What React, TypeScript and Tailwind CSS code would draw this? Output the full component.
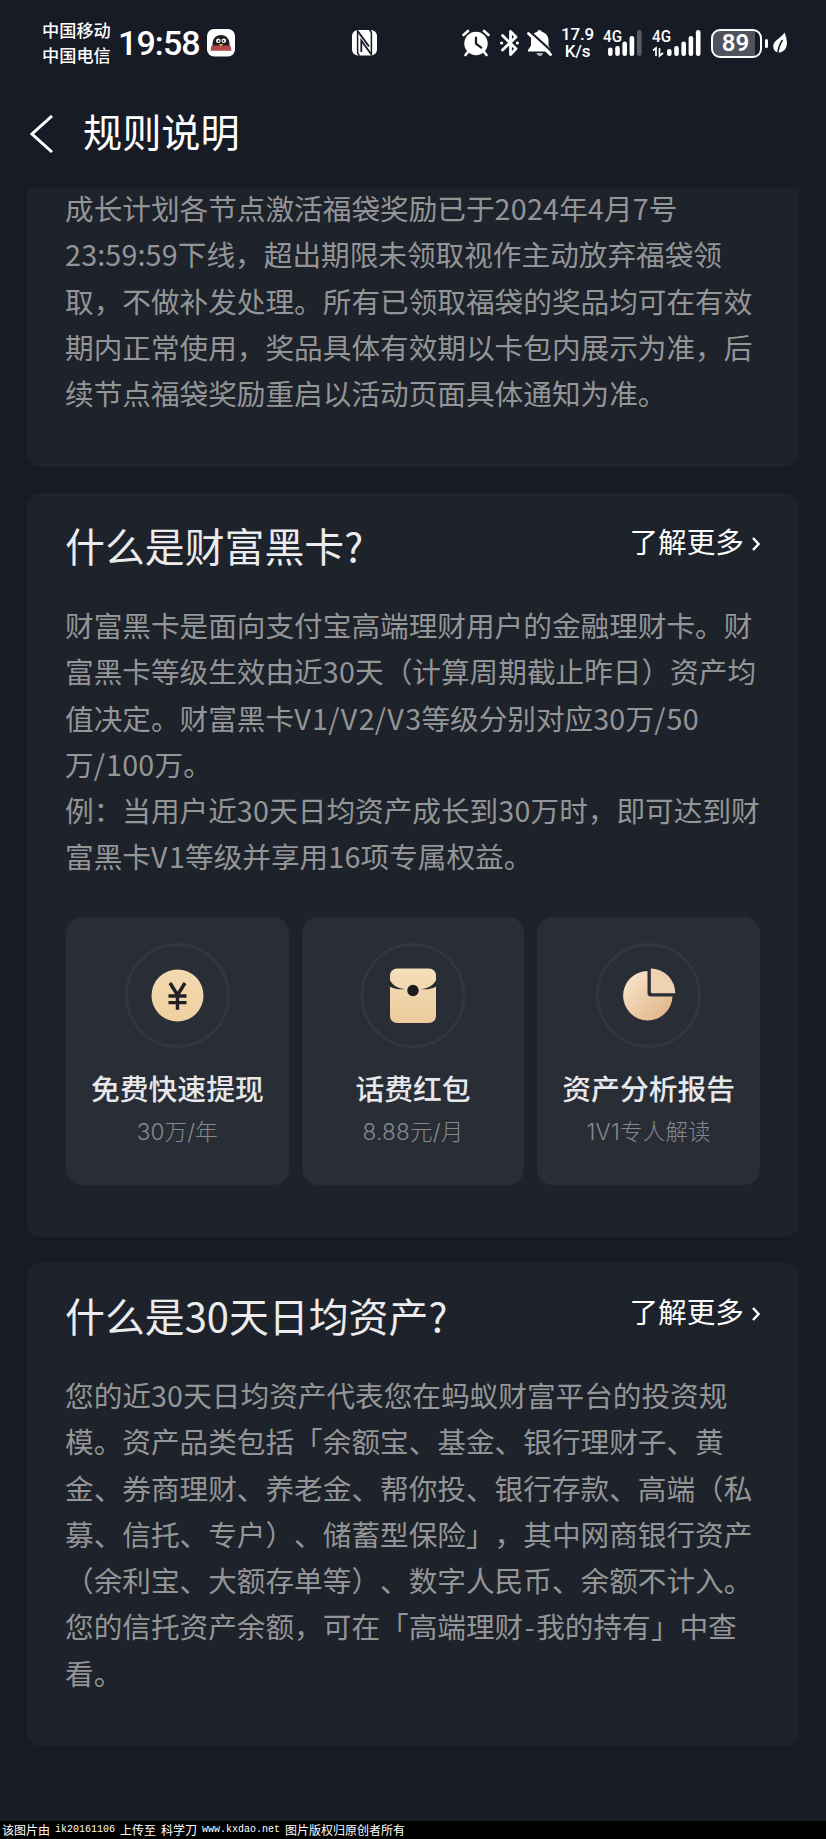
import { ReactNode } from 'react';

interface Benefit {
  id: string;
  title: string;
  desc: string;
  icon: ReactNode;
}

interface RuleCardProps {
  title: string;
  lines: string[];
  children?: ReactNode;
}

const planLines = [
  '成长计划各节点激活福袋奖励已于2024年4月7号',
  '23:59:59下线，超出期限未领取视作主动放弃福袋领',
  '取，不做补发处理。所有已领取福袋的奖品均可在有效',
  '期内正常使用，奖品具体有效期以卡包内展示为准，后',
  '续节点福袋奖励重启以活动页面具体通知为准。',
];

const blackCardLines = [
  '财富黑卡是面向支付宝高端理财用户的金融理财卡。财',
  '富黑卡等级生效由近30天（计算周期截止昨日）资产均',
  '值决定。财富黑卡V1/V2/V3等级分别对应30万/50',
  '万/100万。',
  '例：当用户近30天日均资产成长到30万时，即可达到财',
  '富黑卡V1等级并享用16项专属权益。',
];

const assetLines = [
  '您的近30天日均资产代表您在蚂蚁财富平台的投资规',
  '模。资产品类包括「余额宝、基金、银行理财子、黄',
  '金、券商理财、养老金、帮你投、银行存款、高端（私',
  '募、信托、专户）、储蓄型保险」，其中网商银行资产',
  '（余利宝、大额存单等）、数字人民币、余额不计入。',
  '您的信托资产余额，可在「高端理财-我的持有」中查',
  '看。',
];

const benefits: Benefit[] = [
  { id: 'withdraw', title: '免费快速提现', desc: '30万/年', icon: <CoinIcon /> },
  { id: 'packet', title: '话费红包', desc: '8.88元/月', icon: <PacketIcon /> },
  { id: 'report', title: '资产分析报告', desc: '1V1专人解读', icon: <PieIcon /> },
];

function CoinIcon() {
  return (
    <svg width="106" height="106" viewBox="0 0 106 106" fill="none">
      <defs>
        <linearGradient id="coin" x1="0" y1="0" x2="0" y2="1">
          <stop offset="0" stopColor="#f2d9b0" />
          <stop offset="1" stopColor="#f0d0a0" />
        </linearGradient>
      </defs>
      <circle cx="53.5" cy="52.5" r="51" stroke="#32363f" strokeWidth="3" />
      <circle cx="53.5" cy="52.5" r="26" fill="url(#coin)" />
      <path d="M46 40 53.500 52 61 40M44.500 53h18M44.500 59.600h18M53.500 52v14.800" stroke="#1f2023" strokeWidth="3.400" />
    </svg>
  );
}

function PacketIcon() {
  return (
    <svg width="106" height="106" viewBox="0 0 106 106" fill="none">
      <defs>
        <linearGradient id="packet" x1="0" y1="0" x2="0" y2="1">
          <stop offset="0" stopColor="#f5dfba" />
          <stop offset="1" stopColor="#ecca9b" />
        </linearGradient>
      </defs>
      <circle cx="53" cy="52.5" r="51" stroke="#32363f" strokeWidth="3" />
      <rect x="30" y="25.500" width="46" height="54.500" rx="7" fill="url(#packet)" />
      <path d="M29.800 37c3 5.500 8.500 8.500 15.200 9-5.500 1-11-.3-15.200-2.500zM76.200 37c-3 5.500-8.500 8.500-15.200 9 5.500 1 11-.3 15.200-2.500z" fill="#24262b" />
      <circle cx="53" cy="47.500" r="5.700" fill="#1a1b1e" />
    </svg>
  );
}

function PieIcon() {
  return (
    <svg width="106" height="106" viewBox="0 0 106 106" fill="none">
      <defs>
        <linearGradient id="pie" x1="0" y1="0" x2="1" y2="1">
          <stop offset="0.1" stopColor="#f8e3cb" />
          <stop offset="1" stopColor="#e0b080" />
        </linearGradient>
      </defs>
      <circle cx="52.5" cy="52.5" r="51" stroke="#32363f" strokeWidth="3" />
      <path d="M51.500 28A24.700 24.700 0 1 0 76.500 53.500H55q-3.500 0-3.500-3.500z" fill="url(#pie)" />
      <path d="M54.800 25.500v23.200q0 1.500 1.500 1.500h23A24.800 24.800 0 0 0 54.800 25.500z" fill="#eed2b1" />
    </svg>
  );
}

function QQIcon() {
  return (
    <svg className="ml-2" width="28" height="28" viewBox="0 0 28 28">
      <rect width="28" height="27.500" rx="7" fill="#fff" />
      <path d="M5.500 17C5 10 8.500 6 14 6s9 4 8.500 11z" fill="#1c1b1f" />
      <path d="M4.500 16.500h19l1 5.300h-21z" fill="#b0484a" />
      <circle cx="11.300" cy="11.700" r="2.300" fill="#fff" />
      <circle cx="16.800" cy="11.700" r="2.300" fill="#fff" />
      <circle cx="11.600" cy="11.900" r=".9" fill="#1c1b1f" />
      <circle cx="16.500" cy="11.900" r=".9" fill="#1c1b1f" />
      <path d="M11.800 15h4.500L14 17.800z" fill="#e9a23b" />
    </svg>
  );
}

function NfcIcon() {
  return (
    <svg width="25" height="26" viewBox="0 0 25 26" fill="none">
      <rect width="25" height="25.500" rx="6" fill="#fff" />
      <path d="M5.600 0v22q0 2.500 2 3.500M19.400 25.500v-22q0-2.500-2-3.500" stroke="#171b25" strokeWidth="1.500" />
      <path d="M6 1.500 17 16.500" stroke="#171b25" strokeWidth="2" />
      <path d="M9.300 22V10.500L19 24" stroke="#171b25" strokeWidth="1.800" />
    </svg>
  );
}

function AlarmIcon() {
  return (
    <svg width="28" height="28" viewBox="0 0 28 28" fill="none" stroke="#fff" strokeLinecap="round">
      <circle cx="14" cy="14.500" r="11.700" fill="#fff" stroke="none" />
      <path d="M1.500 6 6 2M26.500 6 22 2M5.500 23.500 3.500 26M22.500 23.500l2 2.500" strokeWidth="2.600" />
      <path d="M14 8.500v6.200l5.300 4" stroke="#171b25" strokeWidth="2.200" />
    </svg>
  );
}

function BluetoothIcon() {
  return (
    <svg className="ml-2.5" width="19" height="28" viewBox="0 0 19 28" fill="none" stroke="#fff" strokeWidth="2.800" strokeLinecap="round" strokeLinejoin="round">
      <path d="M2.500 6.500 16 19.800 10.500 25.500v-23L16 8 2.500 21" />
      <path d="M1.500 14h.2M17.300 14h.2" strokeWidth="3" />
    </svg>
  );
}

function BellOffIcon() {
  return (
    <svg className="ml-2" width="25" height="28" viewBox="0 0 25 28" fill="none">
      <path d="M12.500 1c1.300 0 2 .7 2.200 1.800 4 1 6.800 4.200 6.800 8.400v5.300l2.500 4.500v1.500H1V21l3-4.500v-5.300c0-4.200 2.300-7.400 6.300-8.400C10.500 1.700 11.200 1 12.500 1z" fill="#fff" />
      <path d="M9.500 24h6.500c-.4 2-1.500 3-3.200 3S10 26 9.500 24z" fill="#aeb0b5" />
      <path d="M4 3.500 25 22.500" stroke="#171b25" strokeWidth="2.200" />
      <path d="M1.500 4.500 23.500 25.500" stroke="#fff" strokeWidth="2.800" strokeLinecap="round" />
    </svg>
  );
}

function SignalOne() {
  return (
    <svg className="ml-2 overflow-visible font-['Roboto',sans-serif]" width="40" height="28" viewBox="0 0 40 28">
      <text x="0" y="13.200" fontSize="16.500" fontWeight="500" fill="#fff" textLength="19" lengthAdjust="spacingAndGlyphs">4G</text>
      <rect x="5" y="18.500" width="4.600" height="8.500" rx="2.200" fill="#fff" />
      <rect x="12.200" y="17" width="4.600" height="10" rx="2.200" fill="#fff" />
      <rect x="19.400" y="12.500" width="4.600" height="14.500" rx="2.200" fill="#fff" />
      <rect x="26.600" y="7" width="4.600" height="20" rx="2.200" fill="#fff" />
      <rect x="34" y="1" width="4.600" height="26" rx="2.200" fill="#5a5d65" />
    </svg>
  );
}

function SignalTwo() {
  return (
    <svg className="ml-[9px] overflow-visible font-['Roboto',sans-serif]" width="50" height="28" viewBox="0 0 50 28">
      <text x="0" y="13.200" fontSize="16.500" fontWeight="500" fill="#fff" textLength="19" lengthAdjust="spacingAndGlyphs">4G</text>
      <path d="M1 21.500 4 19v8M7.500 19v8l3.500-3" stroke="#fff" strokeWidth="1.700" fill="none" />
      <rect x="15" y="20" width="4.600" height="7" rx="2.200" fill="#fff" />
      <rect x="22.200" y="17" width="4.600" height="10" rx="2.200" fill="#fff" />
      <rect x="29.400" y="12.500" width="4.600" height="14.500" rx="2.200" fill="#fff" />
      <rect x="36.600" y="7" width="4.600" height="20" rx="2.200" fill="#fff" />
      <rect x="43.900" y="1" width="4.600" height="26" rx="2.200" fill="#fff" />
    </svg>
  );
}

function Battery() {
  return (
    <div className="ml-[9px] flex items-center">
      <div className="flex h-[29px] w-[51px] items-center rounded-[9px] border-2 border-white bg-gradient-to-r from-[#50535b] from-90% to-transparent to-90% pr-0.5">
        <span className="flex-1 text-center font-['Roboto',sans-serif] text-2xl leading-none font-semibold text-white">89</span>
      </div>
      <div className="ml-[3px] h-[9px] w-[3px] rounded-full bg-white" />
      <svg className="ml-[5px]" width="14" height="23" viewBox="0 0 14 23" fill="none">
        <path d="M11.500.5C13.500 5.500 14.500 10 13.500 14c-1 4.500-5 7-8.500 6.500-3.500-.5-5.500-4-4.500-8C1.500 8 8 6 11.500.5z" fill="#fff" />
        <path d="M9.500 8C6.500 12.500 5 16 4.800 22.500" stroke="#171b25" strokeWidth="1.500" />
      </svg>
    </div>
  );
}

function StatusBar() {
  return (
    <div className="flex h-[86px] shrink-0 items-center pl-[42px] text-white">
      <div className="w-[69px] pb-[3px] text-[17.200px] leading-[25px] font-medium whitespace-nowrap">
        <p>中国移动</p>
        <p>中国电信</p>
      </div>
      <span className="ml-[7px] w-[81px] font-['Roboto',sans-serif] text-[34px] leading-none font-medium tracking-[-0.9px]">19:58</span>
      <QQIcon />
      <div className="ml-[117px]">
        <NfcIcon />
      </div>
      <div className="ml-[85px] flex items-center">
        <AlarmIcon />
        <BluetoothIcon />
        <BellOffIcon />
        <div className="ml-2 w-[35px] text-center font-['Roboto',sans-serif] text-[17px] leading-none font-medium tracking-[-0.2px]">
          <p>17.9</p>
          <p>K/s</p>
        </div>
        <SignalOne />
        <SignalTwo />
        <Battery />
      </div>
    </div>
  );
}

// V, slash, hyphen and digits run a little wider than the font's own advance
function spaceOut(line: string) {
  return line.split(/([V/-]|\d+)/).map((part, i) => {
    if (part === 'V') return <span key={i} className="tracking-[1.5px]">V</span>;
    if (part === '/') return <span key={i} className="tracking-[1.2px]">/</span>;
    if (part === '-') return <span key={i} className="px-[1.5px]">-</span>;
    if (/^\d+$/.test(part)) return <span key={i} className="tracking-[0.25px]">{part}</span>;
    return part;
  });
}

function Paragraph({ lines }: { lines: string[] }) {
  return (
    <div className="-ml-px text-[28.650px] leading-[46.300px] whitespace-nowrap text-[#949597]">
      {lines.map((line) => (
        <p key={line}>{spaceOut(line)}</p>
      ))}
    </div>
  );
}

function RuleCard({ title, lines, children }: RuleCardProps) {
  return (
    <section className="rounded-[14px] bg-[#1e222a] px-[39px]">
      <div className="flex h-[109px] items-start justify-between">
        <h2 className="-ml-px pt-[22px] text-[39.900px] leading-[60px] text-[#ececee]">{title}</h2>
        <button className="flex items-center gap-[7px] pt-[28px] text-[28.650px] leading-[40px] text-white">
          了解更多
          <svg className="mt-1.5" width="9" height="14" viewBox="0 0 9 14" fill="none">
            <path d="M2 1 7.500 7 2 13" stroke="#fff" strokeWidth="2.400" />
          </svg>
        </button>
      </div>
      <Paragraph lines={lines} />
      {children}
    </section>
  );
}

export default function App() {
  return (
    <div className="flex h-[1839px] w-[826px] flex-col overflow-hidden bg-[#171b25] font-['Noto_Sans_CJK_SC',sans-serif] [text-spacing-trim:space-all]">
      <StatusBar />

      {/* Title bar */}
      <header className="flex h-[102px] shrink-0 items-start pl-[30px] text-white">
        <svg className="mt-[29px]" width="23" height="38" viewBox="0 0 23 38" fill="none">
          <path d="M22 1 2 19l20 18" stroke="#fff" strokeWidth="3" />
        </svg>
        <h1 className="ml-[30px] pt-[24px] text-[39.200px] leading-[40px]">规则说明</h1>
      </header>

      <main className="flex flex-1 flex-col px-[27px]">
        {/* Scrolled under the title bar, so only the bottom corners are round */}
        <section className="mb-[26px] h-[279px] rounded-b-[14px] bg-[#1e222a] px-[39px]">
          <div className="-mt-[3px]">
            <Paragraph lines={planLines} />
          </div>
        </section>

        <div className="mb-[26px] h-[744px]">
          <RuleCard title="什么是财富黑卡?" lines={blackCardLines}>
            <div className="mt-[37px] flex gap-[13px] pb-[52px]">
              {benefits.map((item) => (
                <div key={item.id} className="flex h-[268px] flex-1 flex-col items-center rounded-2xl bg-[#292d35] pt-[26px]">
                  {item.icon}
                  <h3 className="mt-[18px] text-[28.800px] leading-[42px] font-medium whitespace-nowrap text-[#e6e8ec]">{item.title}</h3>
                  <p className="mt-[7px] font-['Inter','Noto_Sans_CJK_SC',sans-serif] text-[22.500px] leading-[32px] font-light tracking-[0.2px] whitespace-nowrap text-[#858890]">{item.desc}</p>
                </div>
              ))}
            </div>
          </RuleCard>
        </div>

        <RuleCard title="什么是30天日均资产?" lines={assetLines}>
          <div className="h-[50px]" />
        </RuleCard>
      </main>

      <footer className="flex h-[18px] shrink-0 gap-[5px] bg-black pl-0.5 text-[12px] leading-[18px] whitespace-nowrap text-white">
        <span>该图片由</span>
        <span className="font-['Liberation_Mono',monospace] text-[10px]">ik20161106</span>
        <span>上传至</span>
        <span>科学刀</span>
        <span className="font-['Liberation_Mono',monospace] text-[10px]">www.kxdao.net</span>
        <span>图片版权归原创者所有</span>
      </footer>
    </div>
  );
}
